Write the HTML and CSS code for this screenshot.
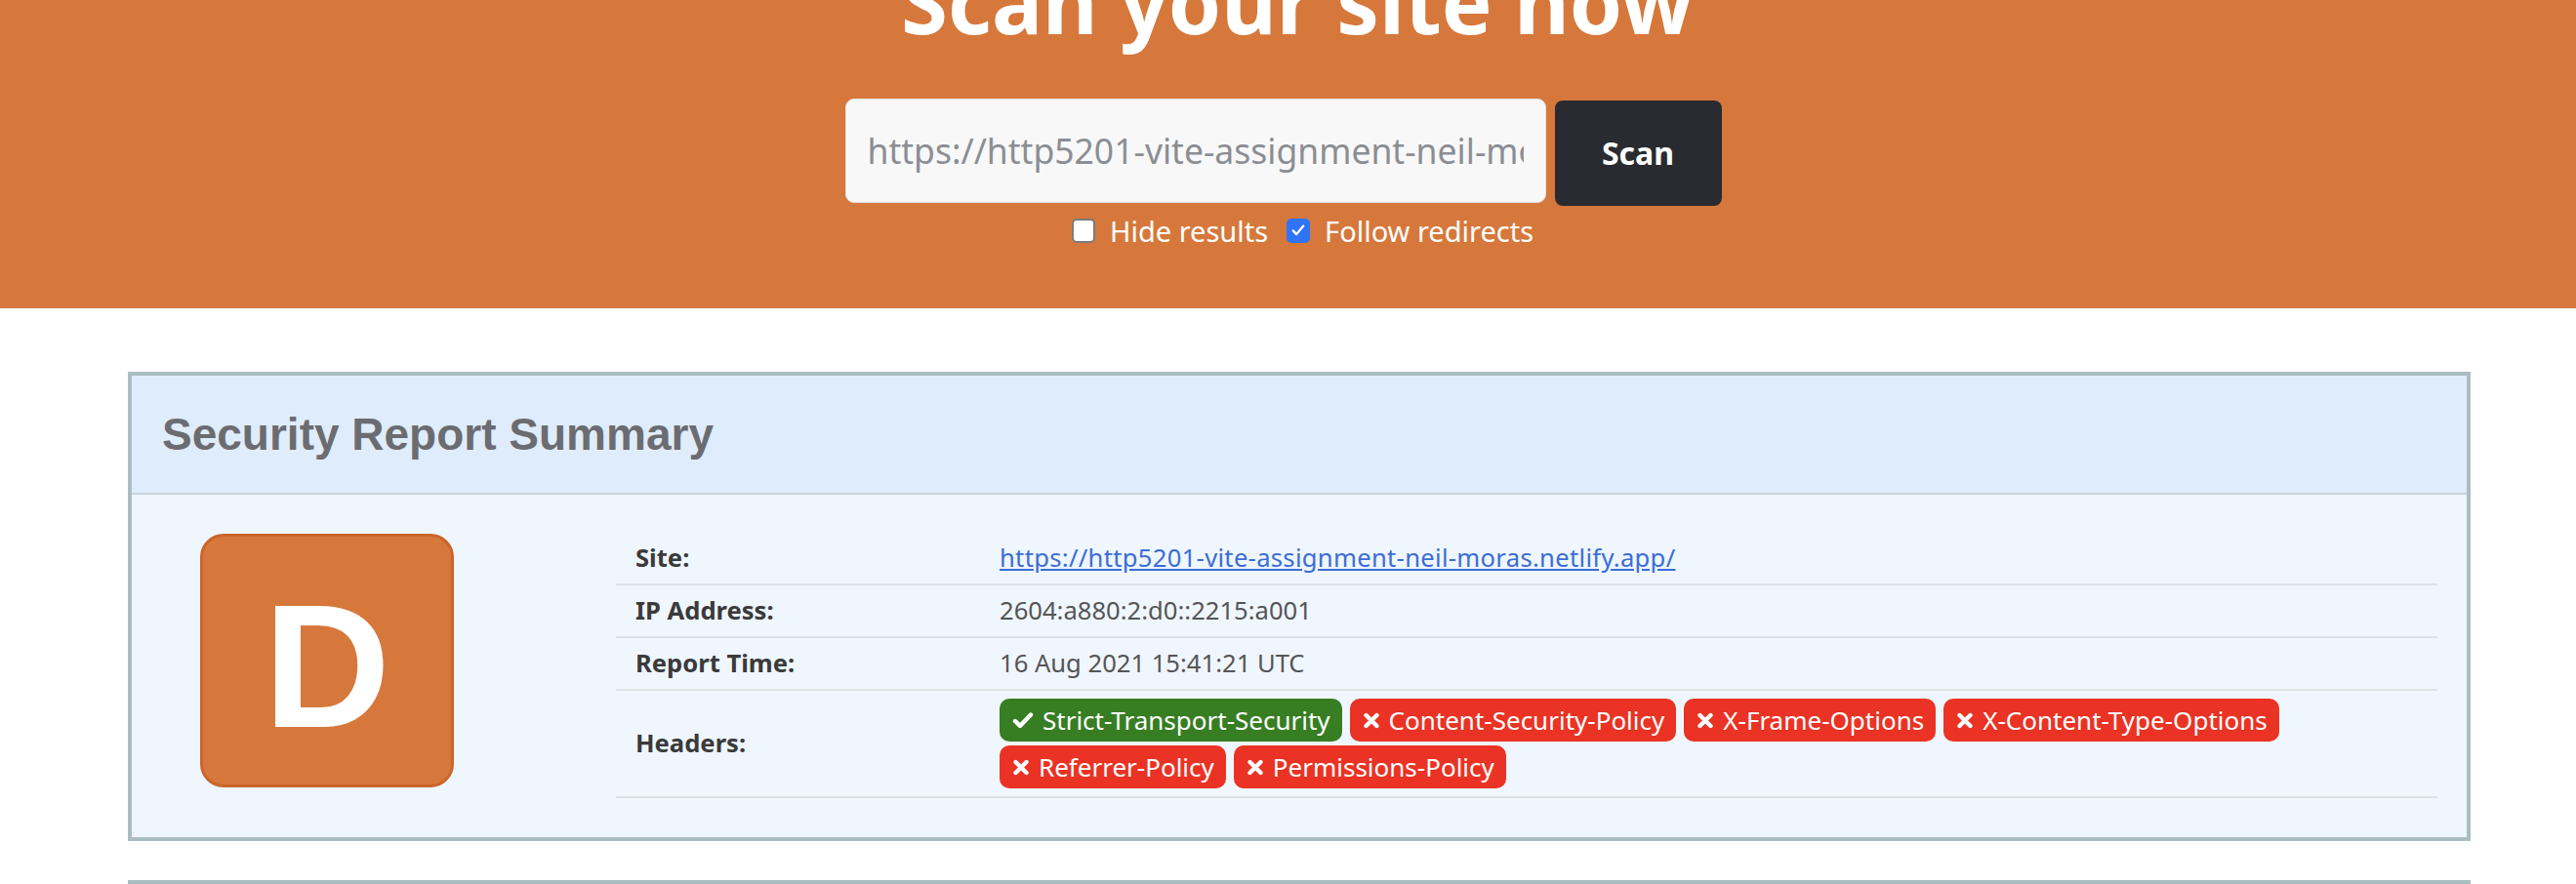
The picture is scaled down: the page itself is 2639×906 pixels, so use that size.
FILE: index.html
```html
<!DOCTYPE html>
<html lang="en">
<head>
<meta charset="utf-8">
<title>Scan your site now</title>
<link rel="stylesheet" href="styles.css">
</head>
<body>
<header class="hero">
  <h1 class="hero-title">Scan your site now</h1>
  <form class="scan-form">
    <div class="scan-row">
      <input class="scan-input" type="text" placeholder="https://http5201-vite-assignment-neil-moras.netlify.app/">
      <button class="scan-btn" type="button">Scan</button>
    </div>
    <div class="scan-options">
      <label class="opt"><span class="box"></span>Hide results</label>
      <label class="opt"><span class="box box-checked"><svg viewBox="0 0 24 24" width="18" height="18"><path d="M5 12.5l4.5 5L19 6" fill="none" stroke="#fff" stroke-width="3" stroke-linecap="round" stroke-linejoin="round"/></svg></span>Follow redirects</label>
    </div>
  </form>
</header>

<main class="content">
  <section class="card">
    <div class="card-header">
      <h2 class="card-title">Security Report Summary</h2>
    </div>
    <div class="card-body">
      <div class="grade">D</div>
      <table class="summary">
        <tr>
          <th>Site:</th>
          <td><a href="#" class="site-link">https://http5201-vite-assignment-neil-moras.netlify.app/</a></td>
        </tr>
        <tr>
          <th>IP Address:</th>
          <td>2604:a880:2:d0::2215:a001</td>
        </tr>
        <tr>
          <th>Report Time:</th>
          <td>16 Aug 2021 15:41:21 UTC</td>
        </tr>
        <tr class="headers-row">
          <th>Headers:</th>
          <td>
            <div class="badges">
              <span class="badge pass"><svg class="ico-check" viewBox="0 0 22 18" width="22" height="18"><path d="M3 10l5 5L19 3.5" fill="none" stroke="#fff" stroke-width="4.4" stroke-linecap="round" stroke-linejoin="round"/></svg>Strict-Transport-Security</span>
              <span class="badge fail"><svg class="ico-x" viewBox="0 0 18 17" width="18" height="17"><path d="M3.5 3l11 11M14.5 3l-11 11" stroke="#fff" stroke-width="4.4" stroke-linecap="round"/></svg>Content-Security-Policy</span>
              <span class="badge fail"><svg class="ico-x" viewBox="0 0 18 17" width="18" height="17"><path d="M3.5 3l11 11M14.5 3l-11 11" stroke="#fff" stroke-width="4.4" stroke-linecap="round"/></svg>X-Frame-Options</span>
              <span class="badge fail"><svg class="ico-x" viewBox="0 0 18 17" width="18" height="17"><path d="M3.5 3l11 11M14.5 3l-11 11" stroke="#fff" stroke-width="4.4" stroke-linecap="round"/></svg>X-Content-Type-Options</span>
              <span class="badge fail"><svg class="ico-x" viewBox="0 0 18 17" width="18" height="17"><path d="M3.5 3l11 11M14.5 3l-11 11" stroke="#fff" stroke-width="4.4" stroke-linecap="round"/></svg>Referrer-Policy</span>
              <span class="badge fail"><svg class="ico-x" viewBox="0 0 18 17" width="18" height="17"><path d="M3.5 3l11 11M14.5 3l-11 11" stroke="#fff" stroke-width="4.4" stroke-linecap="round"/></svg>Permissions-Policy</span>
            </div>
          </td>
        </tr>
      </table>
    </div>
  </section>
  <section class="card card-next"></section>
</main>
</body>
</html>
```

FILE: styles.css
```css
* { box-sizing: border-box; }

html, body {
  margin: 0;
  padding: 0;
  background: #ffffff;
  font-family: "Noto Sans", "Open Sans", sans-serif;
  overflow: hidden;
}

.hero {
  background: #d6783b;
  height: 316px;
  overflow: hidden;
  color: #ffffff;
}

.hero-title {
  margin: -51px 0 0;
  padding-left: 19px;
  text-align: center;
  font-size: 87px;
  line-height: 1.2;
  font-weight: 700;
  color: #ffffff;
}

.scan-form {
  margin: 47.5px 0 0 calc(50% - 454px);
  width: 898px;
}

.scan-row {
  display: flex;
  align-items: flex-start;
  gap: 9px;
}

.scan-input {
  width: 718px;
  height: 107px;
  padding: 0 22px;
  background: #f8f8f8;
  border: 1px solid #e2e2e2;
  border-radius: 9px;
  font-family: "Noto Sans", "Open Sans", sans-serif;
  font-size: 35.5px;
  color: #333;
  outline: none;
}

.scan-input::placeholder {
  color: #8b8e93;
  opacity: 1;
}

.scan-btn {
  margin-top: 2px;
  width: 171px;
  height: 108px;
  background: #2a2b30;
  color: #ffffff;
  border: none;
  border-radius: 8px;
  font-family: "Noto Sans", "Open Sans", sans-serif;
  font-size: 32px;
  font-weight: 700;
}

.scan-options {
  margin-top: 4px;
  padding-left: 40px;
  display: flex;
  justify-content: center;
  gap: 19px;
  font-size: 29px;
  line-height: 43px;
}

.opt {
  display: flex;
  align-items: center;
  gap: 15px;
}

.box {
  width: 24px;
  height: 25px;
  border: 2px solid #7b7b7d;
  border-radius: 5px;
  background: #ffffff;
  display: flex;
  align-items: center;
  justify-content: center;
}

.box-checked {
  background: #2f74f6;
  border-color: #2f74f6;
}

.content {
  padding-top: 65px;
}

.card {
  width: 2400px;
  margin-left: 131px;
  border: 4px solid #aabec2;
}

.card-next {
  margin-top: 40px;
  height: 40px;
}

.card-header {
  background: #dfecfb;
  padding: 33px 31px 32px;
  border-bottom: 2px solid #c6d4dc;
}

.card-title {
  margin: 0;
  font-family: "Liberation Sans", Arial, sans-serif;
  font-size: 46px;
  line-height: 1.2;
  font-weight: 700;
  color: #6b6c71;
}

.card-body {
  background: #eff6fe;
  padding: 39px 30px 40px 70px;
  display: flex;
  align-items: flex-start;
}

.grade {
  flex: none;
  margin-top: 1px;
  width: 260px;
  height: 260px;
  padding-top: 12px;
  border: 3px solid #ca662b;
  border-radius: 24px;
  background: #d6783b;
  color: #ffffff;
  font-family: "Liberation Sans", Arial, sans-serif;
  font-weight: 700;
  font-size: 180px;
  line-height: 1;
  display: flex;
  align-items: center;
  justify-content: center;
}

.summary {
  flex: 1;
  margin-left: 166px;
  border-collapse: collapse;
  font-size: 25.6px;
  line-height: 38px;
  color: #555555;
}

.summary th,
.summary td {
  padding: 7px 20px;
  border-bottom: 2px solid #dde1e5;
  text-align: left;
  vertical-align: middle;
}

.summary th {
  width: 373px;
  font-weight: 700;
  color: #3a3a3a;
}

.site-link {
  color: #3b6dd6;
  text-decoration: underline;
  letter-spacing: 0.3px;
}

.headers-row td {
  padding: 8px 20px 8px;
}

.badges {
  display: flex;
  flex-wrap: wrap;
  gap: 4px 8px;
}

.badge {
  display: inline-flex;
  align-items: center;
  height: 44px;
  padding: 0 12px 0 13px;
  gap: 9px;
  border-radius: 10px;
  color: #ffffff;
  font-size: 26px;
  line-height: 1;
  white-space: nowrap;
}

.badge svg { flex: none; }

.pass { background: #377e23; }
.fail { background: #ea3324; }
```
